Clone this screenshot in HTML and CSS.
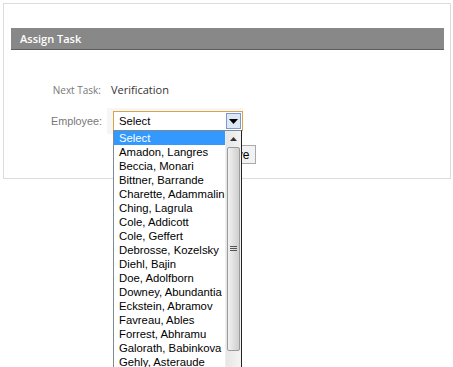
FILE: index.html
```html
<!DOCTYPE html>
<html lang="en">
<head>
  <meta charset="UTF-8" />
  <title>Assign Task</title>
  <link rel="stylesheet" href="styles.css">
</head>
<body>
  <div class="panel">
    <div class="panel-title">Assign Task</div>
    <div class="form">
      <div class="row">
        <span class="label">Next Task:</span>
        <span class="value">Verification</span>
      </div>
      <div class="row">
        <span class="label label-arial">Employee:</span>
        <div class="field">
          <div class="select">
            <span class="select-text">Select</span>
            <span class="select-arrow"><svg width="9" height="5" viewBox="0 0 9 5"><path d="M0 0h9L4.5 5z" fill="#000"/></svg></span>
            <div class="dropdown">
              <ul class="options">
                <li class="active">Select</li>
                <li>Amadon, Langres</li>
                <li>Beccia, Monari</li>
                <li>Bittner, Barrande</li>
                <li>Charette, Adammalin</li>
                <li>Ching, Lagrula</li>
                <li>Cole, Addicott</li>
                <li>Cole, Geffert</li>
                <li>Debrosse, Kozelsky</li>
                <li>Diehl, Bajin</li>
                <li>Doe, Adolfborn</li>
                <li>Downey, Abundantia</li>
                <li>Eckstein, Abramov</li>
                <li>Favreau, Ables</li>
                <li>Forrest, Abhramu</li>
                <li>Galorath, Babinkova</li>
                <li>Gehly, Asteraude</li>
              </ul>
              <div class="scrollbar">
                <div class="scroll-up"><svg width="7" height="4" viewBox="0 0 7 4"><path d="M3.5 0L7 4H0z" fill="#333"/></svg></div>
                <div class="thumb"><span class="grip"></span></div>
              </div>
            </div>
          </div>
        </div>
      </div>
      <div class="row row-actions">
        <button class="save">Save</button>
      </div>
    </div>
  </div>
</body>
</html>
```

FILE: styles.css
```css
html, body { margin: 0; height: 100%; overflow: hidden; background: #fff; }
body { padding: 3px; box-sizing: border-box; font-family: "Open Sans", sans-serif; }

.panel { width: 448px; height: 176px; box-sizing: border-box; border: 1px solid #dcdcdc; padding: 24px 6px 0 7px; }
.panel-title { height: 21px; background: #888; border-bottom: 1px solid #5e5e5e; color: #fff; font-size: 11px; font-weight: 600; line-height: 21px; padding-left: 9px; }

.form { padding-top: 30px; }
.row { display: flex; align-items: center; }
.label { width: 90px; text-align: right; color: #777; font-size: 10px; padding-right: 6px; }
.label-arial { font-family: "Liberation Sans", Arial, sans-serif; font-size: 10.8px; padding-right: 5px; width: 91px; }
.value { color: #333; font-size: 11px; line-height: 20px; margin-left: 4px; }
.row + .row { margin-top: 8px; }

.field { background: #f6f6f6; padding: 3px 0 3px 6px; width: 130px; }
.select { position: relative; height: 20px; box-sizing: border-box; border: 1px solid #d9a441; background: #fff; display: flex; align-items: center; font-family: "Liberation Sans", Arial, sans-serif; font-size: 11.3px; color: #000; }
.select-text { flex: 1; padding-left: 5px; }
.select-arrow { width: 15px; height: 16px; margin-right: 1px; box-sizing: border-box; border: 1px solid #7a9cc4; background: #dbe8f5; display: flex; align-items: center; justify-content: center; }

.dropdown { position: absolute; left: -1px; top: 18px; width: 129px; height: 237px; box-sizing: border-box; border: 1px solid #7f8a99; border-right-color: #222; border-bottom: none; background: #fff; display: flex; z-index: 2; }
.options { list-style: none; margin: 0; padding: 0; flex: 1; overflow: hidden; }
.options li { height: 14px; line-height: 14px; padding-left: 5px; white-space: nowrap; font-size: 11.3px; color: #000; }
.options li.active { background: #3399ff; color: #fff; }

.scrollbar { width: 15px; background: linear-gradient(to right, #e6e6e6, #f4f4f4); border-left: 1px solid #eee; }
.scroll-up { height: 15px; display: flex; align-items: center; justify-content: center; }
.thumb { margin: 1px 0 0 1px; width: 13px; height: 204px; box-sizing: border-box; border: 1px solid #9a9a9a; border-radius: 2px; background: linear-gradient(to right, #f2f2f2, #dcdcdc 60%, #cfcfcf); display: flex; align-items: center; justify-content: center; }
.grip { width: 7px; height: 6px; background: repeating-linear-gradient(to bottom, #555 0 1px, transparent 1px 2px); }

.row + .row-actions { padding-left: 204px; margin-top: 11px; }
.save { height: 19px; padding: 0 6px; border: 1px solid #aaa; background: #f2f2f2; font-family: "Liberation Sans", Arial, sans-serif; font-size: 12px; color: #000; }
```
